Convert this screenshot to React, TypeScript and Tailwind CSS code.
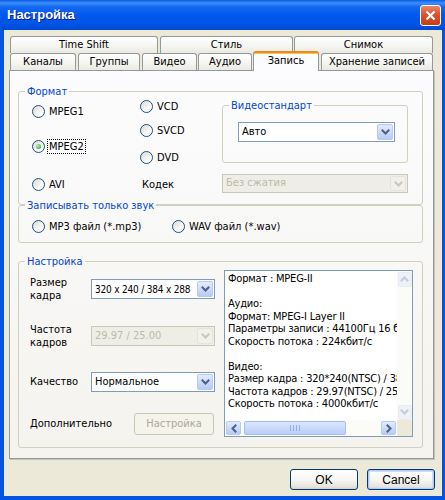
import React from "react";
import clsx from "clsx";

// Windows XP style "Настройка" dialog, recording tab

const Chevron: React.FC<{ color?: string; dir?: "down" | "left" | "right" | "up" }> = ({ color = "#4D6185", dir = "down" }) => {
  const d =
    dir === "down"
      ? "M1.5 1.5L4.5 4.5L7.5 1.5"
      : dir === "up"
      ? "M1.5 4.5L4.5 1.5L7.5 4.5"
      : dir === "left"
      ? "M4.5 1.5L1.5 4.5L4.5 7.5"
      : "M1.5 1.5L4.5 4.5L1.5 7.5";
  const vertical = dir === "down" || dir === "up";
  return (
    <svg width={vertical ? 9 : 6} height={vertical ? 6 : 9} viewBox={vertical ? "0 0 9 6" : "0 0 6 9"}>
      <path d={d} stroke={color} strokeWidth="2" fill="none" strokeLinecap="square" />
    </svg>
  );
};

const Radio: React.FC<{ label: string; checked?: boolean; focus?: boolean; className?: string }> = ({
  label,
  checked,
  focus,
  className,
}) => (
  <div className={clsx("flex items-center h-[16px] gap-[3px]", className)}>
    <span className="w-[13px] h-[13px] shrink-0 rounded-full border border-[#1C5180] bg-[linear-gradient(135deg,#DCDBD3,#FFFFFF_80%)] flex items-center justify-center">
      {checked && <span className="w-[5px] h-[5px] rounded-full bg-[radial-gradient(circle_at_35%_35%,#B5EFA8,#21A121)]" />}
    </span>
    <span className={clsx("leading-[13px] px-[1px]", focus && "outline-1 outline-dotted outline-black")}>{label}</span>
  </div>
);

const Combo: React.FC<{ value: string; className?: string; textClass?: string; disabled?: boolean }> = ({
  value,
  className,
  textClass,
  disabled,
}) => (
  <div
    className={clsx(
      "flex items-stretch border",
      className,
      disabled ? "border-[#C9C7BA] bg-[#EFEEE6] text-[#BDBAA9]" : "border-[#7F9DB9] bg-white text-black"
    )}
  >
    <span className={clsx("flex-1 px-[3px] flex items-center whitespace-nowrap overflow-hidden", textClass)}>{value}</span>
    <span
      className={clsx(
        "w-[16px] m-[1px] rounded-[2px] flex items-center justify-center border",
        disabled
          ? "border-[#E6E4DA] bg-[#F1F0EA]"
          : "border-[#B7CAF4] bg-[linear-gradient(180deg,#E3ECFE,#B7CBF6)]"
      )}
    >
      <Chevron color={disabled ? "#C9C7BA" : "#4D6185"} />
    </span>
  </div>
);

const Group: React.FC<{ label: string; className?: string; legendClass?: string; children: React.ReactNode }> = ({
  label,
  className,
  legendClass,
  children,
}) => (
  <fieldset className={clsx("border border-[#D0D0BF] rounded-[3px] min-w-0", className)}>
    <legend className={clsx("ml-[6px] px-[2px] leading-[13px] text-[#0046D5]", legendClass)}>{label}</legend>
    {children}
  </fieldset>
);

const XpButton: React.FC<{ label: string; className?: string; isDefault?: boolean; disabled?: boolean }> = ({
  label,
  className,
  isDefault,
  disabled,
}) => (
  <div
    className={clsx(
      "flex items-center justify-center rounded-[3px] border",
      className,
      disabled
        ? "border-[#C9C7BA] bg-[#F5F4EA] text-[#ACA899]"
        : "border-[#003C74] bg-[linear-gradient(180deg,#FFFFFF_0%,#F5F5F1_55%,#E6E4DB_88%,#D6D0C5_100%)] text-black",
      isDefault && "shadow-[inset_0_0_0_1px_#B4C8F2,inset_0_0_0_2px_#D2DEF8]"
    )}
  >
    {label}
  </div>
);

const tabsTop = [
  { label: "Time Shift", w: "w-[148px]" },
  { label: "Стиль", w: "w-[133px]" },
  { label: "Снимок", w: "w-[139px]" },
];

const tabsBottom = [
  { label: "Каналы", w: "w-[66px]" },
  { label: "Группы", w: "w-[62px]" },
  { label: "Видео", w: "w-[55px]" },
  { label: "Аудио", w: "w-[54px]" },
  { label: "Запись", w: "w-[66px]", selected: true },
  { label: "Хранение записей", w: "w-[112px]" },
];

const infoLines = [
  "Формат : MPEG-II",
  "",
  "Аудио:",
  "Формат: MPEG-I Layer II",
  "Параметры записи : 44100Гц 16 бит",
  "Скорость потока : 224кбит/с",
  "",
  "Видео:",
  "Размер кадра : 320*240(NTSC) / 384*288(PAL)",
  "Частота кадров : 29.97(NTSC) / 25.00(PAL)",
  "Скорость потока : 4000кбит/с",
];

const tabBase =
  "h-[17px] border border-b-0 border-[#919B9C] rounded-t-[3px] bg-[linear-gradient(180deg,#FFFFFF,#F4F4F0_60%,#EAE9E2)] flex items-center justify-center";

const App: React.FC = () => {
  return (
    <div className="w-[445px] h-[500px] flex flex-col bg-[#0553E1] font-['DejaVu_Sans_Condensed','Liberation_Sans',sans-serif] text-[11px] text-black">
      {/* title bar */}
      <div className="h-[30px] shrink-0 flex items-center pl-[7px] pr-[4px] bg-[linear-gradient(180deg,#0A5BE6_0%,#3D8FF8_10%,#156AF2_22%,#0058EE_50%,#0055E6_80%,#0049D2_100%)]">
        <span className="flex-1 text-white font-bold text-[13px] font-['Liberation_Sans',sans-serif] [text-shadow:1px_1px_0_#0A1E8C]">
          Настройка
        </span>
        <div className="w-[21px] h-[21px] rounded-[3px] border border-white bg-[linear-gradient(180deg,#E9876A,#D9532D_45%,#C23C16)] flex items-center justify-center">
          <svg width="11" height="11" viewBox="0 0 11 11">
            <path d="M1.5 1.5L9.5 9.5M9.5 1.5L1.5 9.5" stroke="white" strokeWidth="2.2" />
          </svg>
        </div>
      </div>

      {/* body */}
      <div className="ml-[4px] mr-[3px] mb-[4px] flex-1 bg-[#ECE9D8] flex flex-col pt-[6px]">
        <div className="ml-[5px] w-[425px] flex flex-col">
          {/* tabs */}
          <div className="px-[1px] flex flex-col">
            <div className="flex gap-[1px]">
              {tabsTop.map((t, i) => (
                <div key={t.label} className={clsx(tabBase, t.w, i === 1 && "ml-[1px]")}>
                  {t.label}
                </div>
              ))}
            </div>
            <div className="flex items-end h-[17px] gap-[1px]">
              {tabsBottom.map((t, i) =>
                t.selected ? (
                  <div
                    key={t.label}
                    className={clsx(
                      "relative z-10 h-[20px] -mb-[1px] border-x border-t-2 border-[#919B9C] border-t-[#E68B2C] rounded-t-[3px] bg-[#FCFCFE] shadow-[inset_0_1px_0_#FFC83C] flex items-center justify-center pb-[2px]",
                      t.w
                    )}
                  >
                    {t.label}
                  </div>
                ) : (
                  <div key={t.label} className={clsx(tabBase, t.w, (i === 1 || i === 2 || i === 5) && "ml-[1px]")}>
                    {t.label}
                  </div>
                )
              )}
            </div>
          </div>

          {/* tab page */}
          <div className="h-[389px] border border-[#919B9C] shadow-[1px_1px_0_#C5C2B2] bg-[linear-gradient(180deg,#FCFCFE,#F4F3EE)] pt-[14px] pl-[8px] pr-[10px] flex flex-col">
            <Group label="Формат">
              <div className="h-[106px] pl-[13px] flex">
                <div className="w-[108px] flex flex-col">
                  <Radio label="MPEG1" className="mt-[5px]" />
                  <Radio label="MPEG2" checked focus className="mt-[19px]" />
                  <Radio label="AVI" className="mt-[22px]" />
                </div>
                <div className="w-[82px] flex flex-col">
                  <Radio label="VCD" />
                  <Radio label="SVCD" className="mt-[8px]" />
                  <Radio label="DVD" className="mt-[11px]" />
                  <div className="mt-[12px] h-[16px] leading-[16px] pl-[2px]">Кодек</div>
                </div>
                <div className="w-[186px] flex flex-col">
                  <Group label="Видеостандарт" className="mt-[1px]">
                    <div className="h-[50px] pl-[15px] pt-[10px]">
                      <Combo value="Авто" className="w-[157px] h-[20px]" />
                    </div>
                  </Group>
                  <Combo value="Без сжатия" disabled className="mt-[11px] w-[186px] h-[19px]" />
                </div>
              </div>
            </Group>

            <Group label="Записывать только звук" className="-mt-[6px]" legendClass="bg-[#F9F9F8]">
              <div className="h-[30px] pt-[6px] pl-[13px] flex">
                <Radio label="MP3 файл (*.mp3)" className="w-[140px]" />
                <Radio label="WAV файл (*.wav)" />
              </div>
            </Group>

            <Group label="Настройка" className="mt-[12px]">
              <div className="h-[179px] pl-[11px] flex">
                <div className="w-[185px] flex flex-col pt-[8px]">
                  <div className="h-[26px] flex items-center">
                    <span className="w-[61px] leading-[13px]">
                      Размер
                      <br />
                      кадра
                    </span>
                    <Combo
                      value="320 x 240 / 384 x 288"
                      textClass="text-[10px] tracking-[-0.2px]"
                      className="w-[124px] h-[20px]"
                    />
                  </div>
                  <div className="h-[26px] mt-[21px] flex items-center">
                    <span className="w-[61px] leading-[13px]">
                      Частота
                      <br />
                      кадров
                    </span>
                    <Combo value="29.97 / 25.00" disabled className="w-[124px] h-[20px]" />
                  </div>
                  <div className="h-[26px] mt-[20px] flex items-center">
                    <span className="w-[61px]">Качество</span>
                    <Combo value="Нормальное" className="w-[124px] h-[20px]" />
                  </div>
                  <div className="h-[26px] mt-[16px] flex items-center">
                    <span className="flex-1">Дополнительно</span>
                    <XpButton label="Настройка" disabled className="w-[80px] h-[22px] mr-[1px]" />
                  </div>
                </div>

                {/* info box */}
                <div className="ml-[9px] mt-[2px] w-[189px] h-[167px] border border-[#7F9DB9] bg-white grid grid-cols-[1fr_15px] grid-rows-[1fr_16px]">
                  <div className="overflow-hidden whitespace-pre pt-[2px] pl-[3px] leading-[12.5px] tracking-[-0.2px]">
                    {infoLines.map((l, i) => (
                      <div key={i} className="h-[12.5px]">
                        {l}
                      </div>
                    ))}
                  </div>
                  <div className="bg-[#FBFBF8] flex flex-col justify-between">
                    <div className="h-[15px] m-[0.5px] rounded-[2px] border border-[#E8ECF7] bg-[#EEF1F8] flex items-center justify-center">
                      <Chevron color="#C3CBDC" dir="up" />
                    </div>
                    <div className="h-[15px] m-[0.5px] rounded-[2px] border border-[#E8ECF7] bg-[#EEF1F8] flex items-center justify-center">
                      <Chevron color="#C3CBDC" />
                    </div>
                  </div>
                  <div className="bg-[#FBFBF8] flex items-stretch">
                    <div className="w-[15px] m-[1px] rounded-[2px] border border-[#B7CAF4] bg-[linear-gradient(180deg,#E3ECFE,#B7CBF6)] flex items-center justify-center">
                      <Chevron dir="left" />
                    </div>
                    <div className="ml-[2px] w-[102px] my-[1px] rounded-[2px] border border-[#A5BEF5] bg-[linear-gradient(180deg,#DCE6FE,#BBCEF8)] flex items-center justify-center gap-[2px]">
                      <span className="w-[1px] h-[6px] bg-[#8DAEF2]" />
                      <span className="w-[1px] h-[6px] bg-[#8DAEF2]" />
                      <span className="w-[1px] h-[6px] bg-[#8DAEF2]" />
                      <span className="w-[1px] h-[6px] bg-[#8DAEF2]" />
                    </div>
                    <div className="flex-1" />
                    <div className="w-[15px] m-[1px] rounded-[2px] border border-[#B7CAF4] bg-[linear-gradient(180deg,#E3ECFE,#B7CBF6)] flex items-center justify-center">
                      <Chevron dir="right" />
                    </div>
                  </div>
                  <div className="bg-[#ECE9D8]" />
                </div>
              </div>
            </Group>
          </div>
        </div>

        {/* dialog buttons */}
        <div className="mt-[10px] pr-[7px] flex justify-end gap-[9px] text-[12px] font-['Liberation_Sans',sans-serif]">
          <XpButton label="OK" className="w-[68px] h-[21px]" />
          <XpButton label="Cancel" isDefault className="w-[68px] h-[21px]" />
        </div>
      </div>
    </div>
  );
};

export default App;
